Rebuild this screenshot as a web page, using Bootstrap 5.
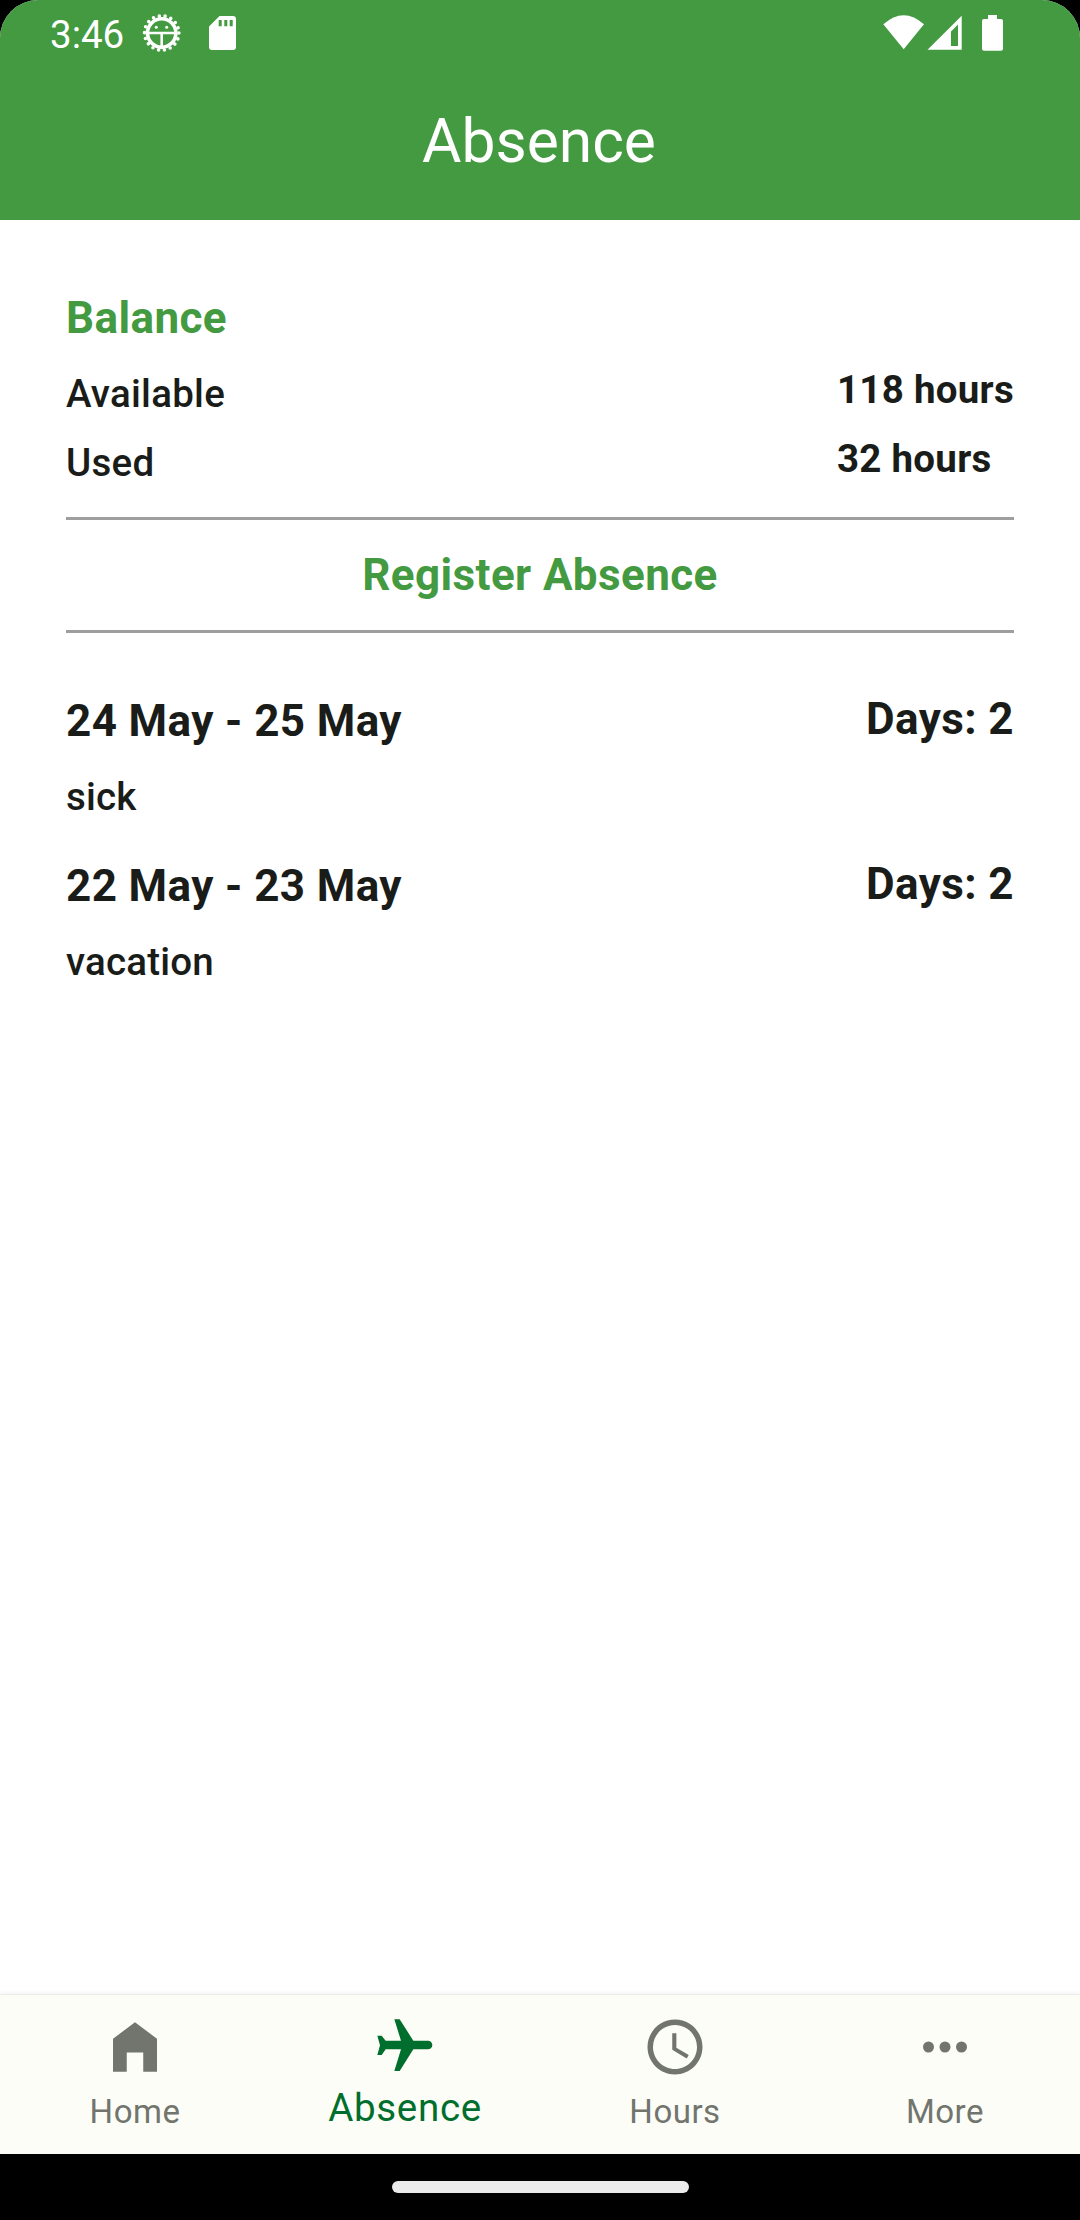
<!DOCTYPE html>
<html lang="en">
<head>
<meta charset="utf-8">
<meta name="viewport" content="width=device-width, initial-scale=1">
<title>Absence</title>
<link href="https://cdn.jsdelivr.net/npm/bootstrap@5.3.0/dist/css/bootstrap.min.css" rel="stylesheet">
<style>
  :root { --brand: #439a40; --ink: #1a1c19; --muted: #72756e; --active: #006e2c; }
  body { font-family: Roboto, "Liberation Sans", sans-serif; color: var(--ink); background: #000; }
  svg { display: block; flex: none; }
  .screen { width: 1080px; height: 2220px; overflow: hidden; }
  .app { border-radius: 38px 38px 0 0; background: #fff; }
  .top-area { height: 220px; background: var(--brand); color: #fff; }
  .status { height: 66px; padding: 0 76px 0 50px; }
  .clock { font-size: 38.5px; line-height: 70px; width: 91px; }
  .title { font-size: 60.5px; line-height: 151px; font-weight: 400; padding-right: 2px; }
  .content { padding: 65px 66px 0; }
  .heading { font-size: 44px; line-height: 66px; font-weight: 700; letter-spacing: .4px; color: var(--brand); }
  .balance { padding-top: 4px; height: 169px; border-bottom: 3px solid #9e9e9e; }
  .balance .line { height: 69px; line-height: 69px; font-size: 38.5px; letter-spacing: .275px; }
  .labels { font-weight: 500; padding-top: 4px; }
  .amounts { font-weight: 700; }
  .register { height: 113px; line-height: 108px; border: 0; border-bottom: 3px solid #9e9e9e; background: none; padding: 0; }
  .entries { padding-top: 46px; }
  .entry { height: 165px; }
  .entry-top { font-size: 44px; line-height: 80px; font-weight: 700; letter-spacing: .4px; }
  .entry-top .dates { padding-top: 2px; }
  .kind { font-size: 38.5px; line-height: 72px; font-weight: 500; letter-spacing: .2px; }
  .tabs { height: 160px; background: #fcfdf7; border-top: 1px solid #ebebe9; box-shadow: 0 -1px 4px rgba(0,0,0,.06); color: var(--muted); z-index: 1; }
  .tab { font-size: 33px; letter-spacing: .5px; padding-top: 19px; color: inherit; text-decoration: none; }
  .tab span { line-height: 66px; margin-top: -1px; }
  .tab.current { color: var(--active); font-size: 38.5px; letter-spacing: .7px; }
  .tab.current span { margin-top: -5px; }
  .gesture { height: 66px; }
  .pill { width: 297px; height: 12px; background: #ebebeb; }
</style>
</head>
<body>
<div class="screen d-flex flex-column">
  <div class="app flex-grow-1 d-flex flex-column overflow-hidden">
    <header class="top-area">
      <div class="status d-flex">
        <div class="clock">3:46</div>
        <!-- debugging gear -->
        <svg width="42" height="66" viewBox="141 0 42 66" fill="none" stroke="#fff">
          <circle cx="161.7" cy="33" r="17.2" stroke-width="3.6" stroke-linecap="round" stroke-dasharray="0 6.004"/>
          <circle cx="161.7" cy="33" r="14.200" stroke-width="3.6"/>
          <path d="M149 33h25.400M161.700 33v16" stroke-width="2.600"/>
          <circle cx="156.300" cy="27.300" r="1.500" fill="#fff" stroke="none"/>
          <circle cx="166.700" cy="27.300" r="1.500" fill="#fff" stroke="none"/>
        </svg>
        <!-- memory card -->
        <svg width="60" height="66" viewBox="183 0 60 66">
          <path fill="#fff" fill-rule="evenodd" d="M219.500 16H233a3 3 0 0 1 3 3v28a3 3 0 0 1-3 3H212a3 3 0 0 1-3-3V26.500ZM218.700 20v6.300h3V20ZM224.300 20v6.300h3V20ZM229.700 20v6.300h3V20Z"/>
        </svg>
        <svg class="ms-auto" width="130" height="66" viewBox="874 0 130 66" fill="#fff">
          <path d="M883.300 24.300Q903.700 6 924 24.300L903.700 49.300Z"/>
          <path fill-rule="evenodd" d="M961.700 15.700V49.800H927.500ZM958 24.500L951 31.500V46H958Z"/>
          <path d="M988 15h9v4h4a2 2 0 0 1 2 2v27.700a2 2 0 0 1-2 2h-17a2 2 0 0 1-2-2V21a2 2 0 0 1 2-2h4Z"/>
        </svg>
      </div>
      <h1 class="title text-center mb-0">Absence</h1>
    </header>

    <main class="content flex-grow-1">
      <h2 class="heading mb-0">Balance</h2>
      <div class="balance d-flex justify-content-between">
        <div class="labels">
          <div class="line">Available</div>
          <div class="line">Used</div>
        </div>
        <div class="amounts">
          <div class="line">118 hours</div>
          <div class="line">32 hours</div>
        </div>
      </div>
      <button type="button" class="register heading d-block w-100 text-center">Register Absence</button>

      <div class="entries">
        <div class="entry">
          <div class="entry-top d-flex justify-content-between"><div class="dates">24 May - 25 May</div><div>Days: 2</div></div>
          <div class="kind">sick</div>
        </div>
        <div class="entry">
          <div class="entry-top d-flex justify-content-between"><div class="dates">22 May - 23 May</div><div>Days: 2</div></div>
          <div class="kind">vacation</div>
        </div>
      </div>
    </main>

    <nav class="tabs d-flex">
      <a class="tab col-3 d-flex flex-column align-items-center" href="#">
        <svg width="66" height="66" viewBox="0 0 24 24" fill="currentColor"><path d="M12 3 4 9v12h5v-7h6v7h5V9z"/></svg>
        <span>Home</span>
      </a>
      <a class="tab current col-3 d-flex flex-column align-items-center" href="#">
        <svg width="66" height="66" viewBox="1116 102 198 198" fill="currentColor"><path d="M1183 118H1199L1240 182H1284A13 13 0 0 1 1284 208H1240L1199 273H1183L1203 208H1157L1145 225H1132L1140 196L1132 167H1145L1157 182H1203Z"/></svg>
        <span>Absence</span>
      </a>
      <a class="tab col-3 d-flex flex-column align-items-center" href="#">
        <svg width="66" height="66" viewBox="0 0 24 24" fill="currentColor"><path d="M11.990 2C6.470 2 2 6.480 2 12s4.470 10 9.990 10C17.520 22 22 17.520 22 12S17.520 2 11.990 2zM12 20c-4.420 0-8-3.580-8-8s3.580-8 8-8 8 3.580 8 8-3.580 8-8 8zM12.500 7H11v6l5.250 3.150.75-1.230-4.500-2.670z"/></svg>
        <span>Hours</span>
      </a>
      <a class="tab col-3 d-flex flex-column align-items-center" href="#">
        <svg width="66" height="66" viewBox="0 0 24 24" fill="currentColor"><circle cx="6" cy="12" r="2"/><circle cx="12" cy="12" r="2"/><circle cx="18" cy="12" r="2"/></svg>
        <span>More</span>
      </a>
    </nav>
  </div>
  <div class="gesture d-flex justify-content-center align-items-center"><div class="pill rounded-pill"></div></div>
</div>
<script src="https://cdn.jsdelivr.net/npm/bootstrap@5.3.0/dist/js/bootstrap.bundle.min.js"></script>
</body>
</html>
